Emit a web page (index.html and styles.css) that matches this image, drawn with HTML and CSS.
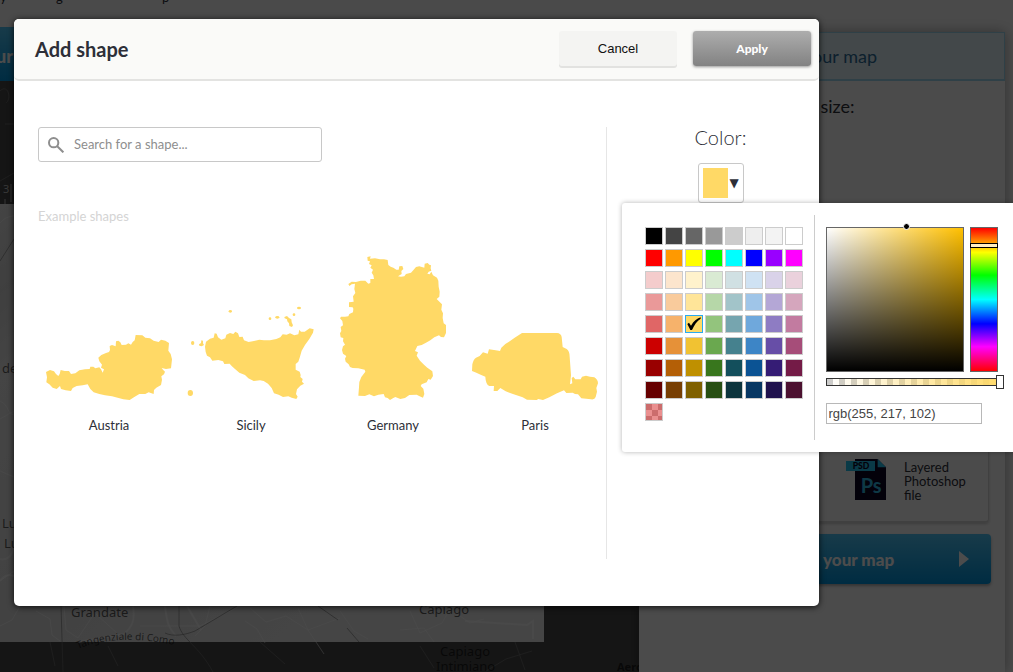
FILE: index.html
```html
<!DOCTYPE html>
<html lang="en">
<head>
<meta charset="utf-8">
<title>Add shape</title>
<meta name="viewport" content="width=device-width, initial-scale=1">
<link rel="stylesheet" href="styles.css">
</head>
<body>
<div class="page">
  <div class="backdrop-page" aria-hidden="true">
    <section class="map-column">
      <div class="intro"><span>y</span><span>g</span><span>p</span></div>
      <div class="step-bar">ur</div>
      <svg class="map" viewBox="0 0 639 591" preserveAspectRatio="xMinYMin slice">
        <defs>
          <linearGradient id="relief" x1="0" y1="0" x2="1" y2="1">
            <stop offset="0" stop-color="#e4e4e4"/><stop offset=".1" stop-color="#d4d4d4"/>
            <stop offset=".2" stop-color="#e6e6e6"/><stop offset=".5" stop-color="#dcdcdc"/>
            <stop offset=".75" stop-color="#e6e6e6"/><stop offset="1" stop-color="#e8e8e8"/>
          </linearGradient>
        </defs>
        <rect width="639" height="591" fill="#484848"/>
        <rect y="123" width="544" height="438" fill="url(#relief)"/>
        <path class="road wide" d="M133 525c2 14 0 20-9 28l-46 8M165 525c2 18 4 22 11 30M187 525l14 24M0 478c8 2 12-4 14-12M0 500c4-6 8-7 14-5M465 540l62 4 6-4 0 18"/>
        <path class="road" d="M0 545l12-6 8-14M36 530l14 8 2 16 8 6M64 525l2 24 12 8 16-24M96 533l22 20M140 545h60l60-30M210 525l-5 20-10 10M245 540l12 8 8 14M250 527l16 14 20-6 22 14 32-12M308 549l-10-22M308 549l16 24M340 530l14 20 14 8M410 530l10 22 22-10 8-14 20 14 14-4M400 549l24-2 10 14M0 320c10 5 6 12 14 14M0 338l14-8M0 390l14 6M0 500l14-10M20 130c-4 8-12 2-20 12"/>
        <path class="line" d="M61 525l2 66M179 525v20c4 14 20 20 34 46M165 552c8 4 20 2 30-2l42-25M0 180l14-22M318 525l20 14M347 547l12 14"/>
        <path class="faint-road" d="M50 561l5 24M108 565l10 20M260 561l25 22M420 565l14 22M486 590l20-12 26-8M515 561l10 28M0 100l14-8M5 43h9M0 10c8-8 12 8 6 12"/>
        <text x="71" y="536">Grandate</text>
        <text x="419" y="533">Capiago</text>
        <text x="440" y="575">Capiago</text>
        <text x="436" y="590">Intimiano</text>
        <text class="bold" x="617" y="590">Aeroporto</text>
        <path id="ring-road" d="M78 568q38-16 96-4" fill="none"/>
        <text class="small"><textPath href="#ring-road">Tangenziale di Como</textPath></text>
        <text x="2" y="292">de</text>
        <text x="2" y="447">Lu</text>
        <text x="4" y="467">Lu</text>
        <text class="scale" x="3" y="112">3</text>
        <path d="M11 103v18M5 118v5" stroke="#b0b0b0"/>
      </svg>
    </section>
    <aside class="sidebar">
      <h2 class="sidebar-tab">Get your map</h2>
      <p class="size-label">Map size:</p>
      <div class="format-card">
        <svg class="psd-icon" viewBox="0 0 120 123">
          <path d="M27 0h68l25 25v98H27z" fill="#0d0423"/>
          <path d="M95 0l25 25H95zM0 6h87v30H0z" fill="#22c3ef"/>
          <text x="20" y="31" font-size="26" fill="#0d0423">PSD</text>
          <text x="44" y="102" font-size="60" class="ps">Ps</text>
        </svg>
        <p class="format-name">Layered Photoshop file</p>
      </div>
      <button class="order-button" type="button" tabindex="-1"><span>Download your map</span><i class="arrow"></i></button>
    </aside>
  </div>
  <div class="shade"></div>

  <main class="dialog" role="dialog" aria-labelledby="dialog-title">
    <header class="dialog-header">
      <h1 id="dialog-title">Add shape</h1>
      <div class="actions">
        <button class="button cancel" type="button">Cancel</button>
        <button class="button apply" type="button">Apply</button>
      </div>
    </header>
    <div class="dialog-body">
      <section class="shape-panel">
        <label class="search">
          <svg viewBox="0 0 48 48" aria-hidden="true"><circle cx="17" cy="17" r="14"/><path d="M27 27l19 19"/></svg>
          <input type="text" placeholder="Search for a shape..." aria-label="Search for a shape">
        </label>
        <h2 class="examples-title">Example shapes</h2>
        <div class="shapes">
          <button class="shape" type="button">
            <svg viewBox="6 -198 426 450"><path d="M30 156L42 150 54 154 60 162 67 168 71 162 74 150 86 153 99 153 105 162 118 160 130 151 147 148 161 147 163 140 172 140 178 145 190 142 195 148 200 158 204 148 195 143 198 134 190 124 187 113 196 105 210 99 219 96 222 90 221 78 228 75 239 79 240 64 247 62 253 67 257 75 270 74 277 70 285 74 290 66 296 61 299 45 319 46 328 53 342 55 353 62 368 66 375 59 388 62 399 69 397 92 404 102 408 118 405 145 390 147 377 144 381 149 387 155 384 163 376 169 378 179 375 195 361 203 354 210 353 222 338 217 328 222 310 222 295 231 281 240 262 238 245 233 228 229 207 226 190 222 173 217 163 207 155 193 140 196 122 198 110 204 105 213 89 211 75 207 72 198 62 207 50 203 40 193 31 187 33 172z"/></svg>
            <span>Austria</span>
          </button>
          <button class="shape" type="button">
            <svg viewBox="0 -123 426 450"><path d="M75 155L78 140 90 131 101 128 104 115 110 116 114 127 124 134 136 130 139 119 150 114 160 117 166 110 174 115 178 126 188 125 192 136 206 141 222 138 238 134 252 136 270 136 289 132 301 127 308 118 320 119 330 115 343 121 355 118 358 104 363 110 374 110 389 100 401 103 399 113 388 132 375 150 365 167 359 188 355 200 347 207 347 224 359 230 362 240 361 246 368 252 366 260 372 266 361 272 351 283 348 297 353 305 349 312 335 308 325 304 309 306 296 299 282 295 275 279 264 266 251 258 240 256 221 258 205 250 195 240 178 233 165 222 155 213 149 206 133 207 129 199 115 195 97 197 90 187 81 182 77 171z"/><ellipse cx="31" cy="294" rx="8" ry="9"/><ellipse cx="38" cy="144" rx="5" ry="6"/><path d="M57 148l6-4 1-8 5 1v8l3 5-7 4-7-2z"/><ellipse cx="151" cy="49" rx="5" ry="4"/><circle cx="270" cy="71" r="4"/><ellipse cx="292" cy="67" rx="6" ry="4"/><path d="M313 66l8-3 6 6 7 4 1 9 4 9-3 5-8-3-1-8-5-6-1-6-7-3z"/><circle cx="342" cy="59" r="4"/><ellipse cx="357" cy="39" rx="6" ry="4"/></svg>
            <span>Sicily</span>
          </button>
          <button class="shape" type="button">
            <svg viewBox="-24 27 426 450"><path d="M112 36L122 34 120 41 135 40 150 43 162 43 173 45 175 60 182 65 190 68 199 74 206 74 208 64 217 63 220 72 214 78 215 87 204 94 213 95 223 94 228 87 243 83 251 74 258 66 268 64 283 68 284 56 293 54 298 59 303 61 302 70 304 77 296 80 292 86 299 88 304 80 309 91 321 98 325 107 326 125 329 140 328 155 320 162 329 171 336 178 334 194 339 205 338 219 341 235 348 240 348 264 342 277 333 276 327 271 313 277 301 286 288 293 275 300 262 303 255 318 264 322 260 332 270 347 282 359 292 368 307 379 309 393 302 404 295 402 290 412 275 418 272 423 280 431 283 447 279 458 269 454 260 449 238 450 225 459 211 462 196 456 190 459 180 465 173 459 165 457 161 447 145 449 132 454 118 448 105 453 85 452 87 427 88 411 94 396 106 380 104 374 85 370 68 369 60 366 56 358 47 350 45 341 49 333 39 326 36 315 39 304 45 299 39 289 40 279 32 277 30 265 34 258 32 246 39 241 37 228 30 220 33 215 45 215 55 214 58 207 69 202 70 191 68 187 57 186 57 172 71 170 69 154 76 144 73 132 75 116 65 118 58 123 55 117 65 110 78 111 92 107 106 107 115 116 121 114 121 102 132 102 130 91 125 83 129 74 121 68 125 61 117 57 120 49 113 47z"/></svg>
            <span>Germany</span>
          </button>
          <button class="shape" type="button">
            <svg viewBox="6 -198 426 450"><path d="M30 153L31 133Q34 118 42 113L53 108 63 97 77 101 81 88 101 91 114 93 118 83 130 72 141 65 158 53 180 39H285Q297 40 299 51L302 81 314 87Q323 94 323 110L327 166 324 193 331 190 329 174 334 170 340 178 356 178 360 170 372 167 384 170 397 172Q408 179 408 190L403 204 405 215 401 231Q398 240 387 238L358 235 348 223 339 222 332 218 313 219 306 211 285 220 262 232 243 240 229 237 224 240 195 239 182 232 155 223 131 214 115 204 106 213 95 213 96 198 82 198Q71 193 70 170L56 164 43 158z"/></svg>
            <span>Paris</span>
          </button>
        </div>
      </section>
      <section class="color-panel">
        <h2 class="color-title">Color:</h2>
        <div class="color-field">
          <button class="color-trigger" type="button" aria-label="Choose color"><span class="preview"></span><span class="caret">▼</span></button>
          <div class="picker">
            <div class="palette"></div>
            <div class="mixer">
              <div class="mixer-row">
                <div class="tone"><span class="tone-dot"></span></div>
                <input class="hue" type="range" min="0" max="360" value="39" aria-label="Hue">
              </div>
              <input class="alpha" type="range" min="0" max="100" value="100" aria-label="Opacity">
              <input class="value" type="text" value="rgb(255, 217, 102)" aria-label="Color value">
            </div>
          </div>
        </div>
      </section>
    </div>
  </main>
</div>
<script src="script.js"></script>
</body>
</html>
```

FILE: script.js
```js
const colors = [
  "#000 #444 #666 #999 #ccc #eee #f3f3f3 #fff",
  "#f00 #f90 #ff0 #0f0 #0ff #00f #90f #f0f",
  "#f4cccc #fce5cd #fff2cc #d9ead3 #d0e0e3 #cfe2f3 #d9d2e9 #ead1dc",
  "#ea9999 #f9cb9c #ffe599 #b6d7a8 #a2c4c9 #9fc5e8 #b4a7d6 #d5a6bd",
  "#e06666 #f6b26b #ffd966 #93c47d #76a5af #6fa8dc #8e7cc3 #c27ba0",
  "#c00 #e69138 #f1c232 #6aa84f #45818e #3d85c6 #674ea7 #a64d79",
  "#900 #b45f06 #bf9000 #38761d #134f5c #0b5394 #351c75 #741b47",
  "#600 #783f04 #7f6000 #274e13 #0c343d #073763 #20124d #4c1130"
].join(" ").split(" ");

const palette = document.querySelector(".palette");

function addSwatch(color) {
  const swatch = document.createElement("button");
  swatch.type = "button";
  swatch.className = "swatch";
  swatch.setAttribute("aria-label", color);
  swatch.style.backgroundColor = color;
  palette.append(swatch);
  return swatch;
}

for (const color of colors) {
  const swatch = addSwatch(color);
  if (color === "#ffd966") {
    swatch.classList.add("selected");
    swatch.innerHTML = '<svg viewBox="0 0 48 48"><path d="M4 24l5-4 6 9C23 15 32 8 44 4v4C33 15 25 26 18 42h-5z"/></svg>';
  }
}
addSwatch("#ea8f8f").classList.add("translucent");
```

FILE: styles.css
```css
* { box-sizing: border-box; }

body {
  margin: 0;
  color: #2d2f38;
  font-family: Lato, "Liberation Sans", sans-serif;
  font-size: 13px;
}

h1, h2, p { margin: 0; font-weight: 400; }
button, input { font: inherit; color: inherit; margin: 0; }
button { cursor: pointer; }

.page {
  position: relative;
  min-height: 100vh;
  overflow: hidden;
  padding: 19px 14px 66px;
}

/* Editor behind the dialog */
.backdrop-page {
  position: absolute;
  inset: 0;
  display: flex;
  align-items: stretch;
  padding-right: 8px;
  background: #f8f8f8;
}
.shade {
  position: absolute;
  inset: 0;
  background: rgba(0, 0, 0, .7);
}
.map-column {
  flex: 1;
  display: flex;
  flex-direction: column;
  min-width: 0;
}
.intro {
  display: grid;
  grid-template-columns: 56px 106px auto;
  align-items: start;
  height: 27px;
  line-height: 0;
  margin-top: -3px;
  margin-bottom: 3px;
}
.step-bar {
  height: 54px;
  line-height: 58px;
  background: linear-gradient(#50c4f5, #0093dc);
  color: #fff;
  font-size: 18px;
  font-weight: 900;
  text-indent: -4px;
}
.map { flex: 1; width: 100%; min-height: 0; }
.map text { font: 13px "Noto Sans", sans-serif; fill: rgba(0, 0, 0, .62); }
.map .small { font-size: 10px; }
.map .bold { font-size: 11px; font-weight: 700; }
.map .scale { font-size: 11px; fill: #bbb; }
.road { fill: none; stroke: #fff; stroke-opacity: .5; stroke-width: 1; }
.wide { stroke-width: 2; }
.line { fill: none; stroke: #777; stroke-width: 1; stroke-opacity: .6; }
.faint-road { fill: none; stroke: #666; stroke-width: 1; }

.sidebar {
  flex: 0 0 366px;
  display: flex;
  flex-direction: column;
  margin-top: 32px;
  background: #fbfbfb;
  box-shadow: 0 0 12px rgba(0, 0, 0, .35);
}
.sidebar-tab {
  height: 49px;
  border: 1px solid #9fd6ef;
  border-bottom-width: 2px;
  background: #e0f1f7;
  color: #2d6c98;
  font-size: 18px;
  line-height: 46px;
  padding-left: 3px;
  text-align: center;
}
.size-label {
  flex: 0 0 340px;
  padding: 13px 9px 0 0;
  font-size: 18px;
  line-height: 24px;
  text-align: center;
}
.format-card {
  display: flex;
  align-items: flex-start;
  gap: 18px;
  height: 102px;
  margin: 0 16px 11px 14px;
  padding: 37px 16px 0 192px;
  border: 1px solid #d8d8d8;
  border-bottom-width: 2px;
  border-radius: 4px;
  box-shadow: 0 1px 3px rgba(0, 0, 0, .2);
}
.psd-icon { flex: none; width: 40px; height: 41px; }
.psd-icon text { font-family: Lato, sans-serif; font-weight: 900; }
.psd-icon .ps { font-weight: 700; fill: #30bce8; }
.format-name { padding-top: 1px; line-height: 14px; }
.order-button {
  display: flex;
  align-items: center;
  justify-content: space-between;
  height: 50px;
  margin: 0 14px;
  padding: 0 22px 0 88px;
  border: 0;
  border-radius: 4px;
  background: linear-gradient(#50c4f5, #0093dc);
  box-shadow: 0 2px 3px rgba(0, 0, 0, .3);
  color: #fff;
  font-size: 17px;
  font-weight: 900;
}
.arrow {
  border: 8px solid transparent;
  border-left: 10px solid #fff;
  border-right: 0;
}

/* Dialog */
.dialog {
  position: relative;
  width: 805px;
  max-width: 100%;
  border-radius: 5px;
  background: #fff;
  box-shadow: 0 1px 6px rgba(0, 0, 0, .8);
}
.dialog-header {
  display: flex;
  align-items: center;
  justify-content: space-between;
  height: 62px;
  padding: 0 8px 1px 21px;
  border-bottom: 2px solid #e3e3e1;
  border-radius: 5px;
  background: #fafaf8;
}
.dialog-header h1 { font-size: 20px; font-weight: 700; }
.actions { display: flex; gap: 16px; }
.button {
  width: 118px;
  height: 35px;
  padding: 0;
  border: 0;
  border-radius: 3px;
}
.cancel {
  background: #f4f4f2;
  box-shadow: 0 2px 0 #e2e2e0;
  color: #111;
  font: 13px "Liberation Sans", Arial, sans-serif;
}
.apply {
  background: linear-gradient(#adadad, #828282);
  box-shadow: 0 1px 3px rgba(0, 0, 0, .4);
  color: #fff;
  font-size: 12px;
  font-weight: 900;
}
.dialog-body {
  display: flex;
  padding: 46px 0 47px 24px;
}
.shape-panel {
  flex: 1;
  min-width: 0;
  min-height: 432px;
  border-right: 1px solid #e6e6e6;
}
.search {
  display: flex;
  align-items: center;
  gap: 10px;
  width: 50%;
  height: 35px;
  padding: 0 9px;
  border: 1px solid #c8c8c8;
  border-radius: 3px;
}
.search svg {
  flex: none;
  width: 16px;
  height: 16px;
  fill: none;
  stroke: #8e8e8e;
  stroke-width: 6;
}
.search input {
  flex: 1;
  min-width: 0;
  padding: 0 0 1px;
  border: 0;
  outline: 0;
  background: none;
}
.search input::placeholder { color: #8e8e8e; }
.examples-title {
  margin: 44px 0 28px;
  color: #d4d4d4;
  font-size: 13px;
  line-height: 20px;
}
.shapes {
  display: grid;
  grid-template-columns: repeat(4, 1fr);
}
.shape {
  padding: 0;
  border: 0;
  background: none;
  line-height: 20px;
}
.shape svg {
  display: block;
  width: 100%;
  height: 150px;
  margin-bottom: 11px;
  fill: #ffd966;
}
.color-panel {
  flex: 0 0 212px;
  display: flex;
  flex-direction: column;
  align-items: center;
  gap: 16px;
  padding-left: 15px;
}
.color-title { font-size: 20px; font-weight: 300; line-height: 20px; }
.color-field { position: relative; }
.color-trigger {
  display: flex;
  align-items: center;
  gap: 2px;
  width: 46px;
  height: 40px;
  padding: 0 4px;
  border: 1px solid #c8c8c8;
  border-radius: 3px;
  background: #fff;
}
.preview { flex: none; width: 25px; height: 30px; background: #ffd966; }
.caret { font: 12px "DejaVu Sans", sans-serif; }

/* Color picker */
.picker {
  position: absolute;
  top: 40px;
  left: -76px;
  display: flex;
  padding: 12px 0;
  border-radius: 3px;
  background: #fff;
  box-shadow: 0 0 5px rgba(0, 0, 0, .3);
}
.palette {
  display: grid;
  grid-template-columns: repeat(8, 18px);
  align-content: start;
  gap: 4px 2px;
  padding: 12px 11px 19px 23px;
  border-right: 1px solid #ccc;
}
.swatch {
  width: 18px;
  height: 18px;
  padding: 0;
  border: 1px solid #ccc;
}
.swatch svg { display: block; width: 16px; height: 16px; }
.selected { border-color: #2aaaf0; }
.translucent {
  background-image: conic-gradient(transparent 25%, #cc6c6c 0 50%, transparent 0 75%, #cc6c6c 0);
  background-size: 12px 12px;
}
.mixer {
  display: flex;
  flex-direction: column;
  width: 202px;
  padding: 12px 13px 0 11px;
}
.mixer-row { display: flex; gap: 6px; }
.tone {
  position: relative;
  width: 138px;
  height: 145px;
  border: 1px solid #666;
  background: linear-gradient(to top, #000, transparent), linear-gradient(to right, #fff, transparent), #ffc000;
}
.tone-dot {
  position: absolute;
  top: -5px;
  left: 76px;
  width: 7px;
  height: 7px;
  border: 1px solid #fff;
  border-radius: 50%;
  background: #000;
}
.hue, .alpha { appearance: none; outline: 0; }
.hue {
  writing-mode: vertical-lr;
  width: 28px;
  height: 145px;
  border: 1px solid #666;
  background: linear-gradient(#f00, #ff0 17%, #0f0 33%, #0ff 50%, #00f 67%, #f0f 83%, #f00);
}
.hue::-webkit-slider-thumb {
  appearance: none;
  width: 28px;
  height: 5px;
  border: 1px solid #000;
  background: #ffefc0;
}
.hue::-webkit-slider-runnable-track { width: 28px; margin: 0 -1px; }
.alpha {
  width: 178px;
  height: 14px;
  margin: 3px 0 14px;
  background: none;
}
.alpha::-webkit-slider-runnable-track {
  height: 8px;
  border: 1px solid #333;
  border-right: 0;
  background: linear-gradient(to right, transparent, #ffd966), repeating-conic-gradient(#fff 0 25%, #ccc 0 50%) 0 0 / 12px 12px;
}
.alpha::-webkit-slider-thumb {
  appearance: none;
  width: 8px;
  height: 14px;
  margin-top: -4px;
  border: 1px solid #333;
  background: #fff;
}
.value {
  width: 156px;
  height: 21px;
  padding: 0 2px;
  border: 1px solid #b8b8b8;
  color: #444;
  font: 13px "Liberation Sans", Arial, sans-serif;
}
```
